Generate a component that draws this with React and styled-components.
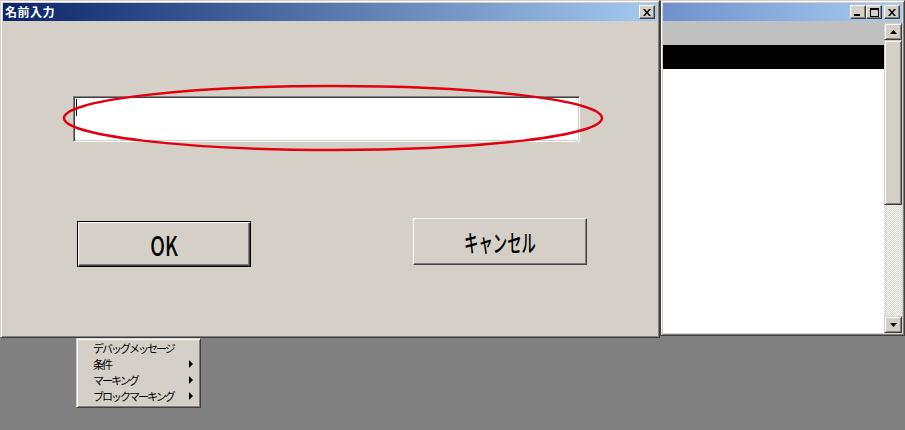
import React from "react";
import styled, { createGlobalStyle } from "styled-components";

const Global = createGlobalStyle`
  html, body { margin: 0; padding: 0; }
  body {
    width: 905px; height: 430px; overflow: hidden;
    background: #808080;
    font-family: "Noto Sans CJK JP", "Noto Sans", sans-serif;
  }
  * { box-sizing: border-box; }
`;

const Desktop = styled.div`
  width: 905px; height: 430px;
  display: flex; flex-direction: column;
  overflow: hidden;
`;

const TopRow = styled.div`
  display: flex; align-items: flex-start;
`;

const Frame = styled.div`
  background: #d4d0c8;
  border: 1px solid;
  border-color: #d4d0c8 #404040 #404040 #d4d0c8;
  box-shadow: inset 1px 1px #fff, inset -1px -1px #808080;
  padding: 2px;
  display: flex; flex-direction: column;
`;

const Dialog = styled(Frame)`
  width: 660px; height: 338px; flex: none;
`;

const BgWindow = styled(Frame)`
  flex: 1; height: 336px; border-left-color: #404040;
`;

const TitleBar = styled.div`
  height: 18px; flex: none;
  display: flex; align-items: center;
  padding: 0 2px 0 2px;
  background: ${p => p.$alt
    ? "linear-gradient(to right, #6f90cc, #a9ccf2)"
    : "linear-gradient(to right, #0a246a, #a6caf0)"};
`;

const Title = styled.span`
  flex: 1;
  color: #fff; font-weight: bold; font-size: 12px; letter-spacing: 0.5px;
  line-height: 18px;
`;

const CapBtn = styled.div`
  width: 16px; height: 14px; flex: none;
  margin-left: ${p => p.$gap || 0}px;
  background: #d4d0c8;
  border: 1px solid; border-color: #fff #404040 #404040 #fff;
  box-shadow: inset -1px -1px #808080;
  display: flex; align-items: center; justify-content: center;
`;

const DialogBody = styled.div`
  flex: 1; display: flex; flex-direction: column;
  padding: 75px 0 0 70px;
`;

const FieldWrap = styled.div`
  position: relative; width: 507px; height: 46px;
`;

const Field = styled.div`
  width: 100%; height: 100%;
  background: #fff;
  border: 1px solid; border-color: #808080 #fff #fff #808080;
  box-shadow: inset 1px 1px #404040, inset -1px -1px #d4d0c8;
  padding: 2px 0 0 2px;
`;

const Caret = styled.div`
  width: 1px; height: 17px; background: #000;
`;

const Ellipse = styled.svg`
  position: absolute; left: -10px; top: -12px; overflow: visible;
`;

const ButtonRow = styled.div`
  display: flex; align-items: flex-start;
  margin-top: 79px; padding-left: 4px;
`;

const PushButton = styled.div`
  width: 174px; height: ${p => p.$h || 46}px;
  margin-left: ${p => p.$ml || 0}px;
  margin-top: ${p => p.$mt || 0}px;
  background: #d4d0c8;
  border: 1px solid;
  border-color: ${p => p.$default ? "#000" : "#fff #404040 #404040 #fff"};
  box-shadow: ${p => p.$default
    ? "inset 1px 1px #fff, inset -1px -1px #404040, inset -2px -2px #808080"
    : "inset -1px -1px #808080"};
  display: flex; align-items: center; justify-content: center;
`;

const BtnLabel = styled.span`
  display: inline-block;
  font-family: "Noto Sans CJK JP", "Noto Sans", sans-serif;
  font-size: ${p => p.$size || 26}px;
  font-weight: 500;
  color: #000;
  transform: scaleX(${p => p.$sx || 0.7});
  line-height: 1;
`;

const Client = styled.div`
  flex: 1; display: flex; background: #c0c0c0;
`;

const ListArea = styled.div`
  flex: 1; display: flex; flex-direction: column;
`;

const Band = styled.div`
  height: 24px; flex: none; background: ${p => p.$c};
`;

const White = styled.div`
  flex: 1; background: #fff;
`;

const ScrollBar = styled.div`
  width: 18px; flex: none; margin-top: 2px; margin-right: 0;
  display: flex; flex-direction: column;
  background: repeating-conic-gradient(#fff 0 25%, #d4d0c8 0 50%) 0 0 / 2px 2px;
`;

const ScrollBtn = styled.div`
  height: ${p => p.$h || 17}px; flex: none;
  background: #d4d0c8;
  border: 1px solid; border-color: #d4d0c8 #404040 #404040 #d4d0c8;
  box-shadow: inset 1px 1px #fff, inset -1px -1px #808080;
  display: flex; align-items: center; justify-content: center;
`;

const Track = styled.div`
  flex: 1;
`;

const Menu = styled.div`
  margin-left: 76px; width: 125px; height: 70px;
  background: #d4d0c8;
  border: 1px solid; border-color: #d4d0c8 #404040 #404040 #d4d0c8;
  box-shadow: inset 1px 1px #fff, inset -1px -1px #808080;
  padding: 1px 3px 0 3px;
  display: flex; flex-direction: column;
`;

const MenuItem = styled.div`
  height: 16px; display: flex; align-items: center;
  padding-left: 13px; padding-right: 4px;
  font-size: 11px; color: #000; letter-spacing: -2px;
  white-space: nowrap;
`;

const MenuText = styled.span`
  flex: 1;
`;

const Arrow = styled.span`
  width: 0; height: 0;
  border-top: 4px solid transparent; border-bottom: 4px solid transparent;
  border-left: 4px solid #000;
`;

const CloseGlyph = () => (
  <svg width="8" height="7" viewBox="0 0 8 7">
    <path d="M0 0h2l2 2.5 2-2.5h2l-3 3.5 3 3.5h-2l-2-2.5-2 2.5h-2l3-3.5z" fill="#000" />
  </svg>
);

const MinGlyph = () => (
  <svg width="8" height="7" viewBox="0 0 8 7"><rect x="0" y="5" width="6" height="2" fill="#000" /></svg>
);

const MaxGlyph = () => (
  <svg width="9" height="9" viewBox="0 0 9 9">
    <rect x="0.5" y="0.5" width="8" height="8" fill="none" stroke="#000" />
    <rect x="0" y="0" width="9" height="2" fill="#000" />
  </svg>
);

const Tri = ({ down }) => (
  <svg width="7" height="4" viewBox="0 0 7 4">
    <path d={down ? "M0 0h7l-3.5 4z" : "M3.5 0l3.5 4h-7z"} fill="#000" />
  </svg>
);

export default function App() {
  return (
    <>
      <Global />
      <Desktop>
        <TopRow>
          <Dialog>
            <TitleBar>
              <Title>名前入力</Title>
              <CapBtn><CloseGlyph /></CapBtn>
            </TitleBar>
            <DialogBody>
              <FieldWrap>
                <Field><Caret /></Field>
                <Ellipse width="540" height="68">
                  <ellipse cx="270" cy="34" rx="269" ry="32" fill="none" stroke="#e00010" strokeWidth="2.5" />
                </Ellipse>
              </FieldWrap>
              <ButtonRow>
                <PushButton $default>
                  <BtnLabel $size={27} $sx={0.72}>OK</BtnLabel>
                </PushButton>
                <PushButton $ml={162} $mt={-3} $h={47}>
                  <BtnLabel $size={24} $sx={0.6}>キャンセル</BtnLabel>
                </PushButton>
              </ButtonRow>
            </DialogBody>
          </Dialog>
          <BgWindow>
            <TitleBar $alt>
              <Title />
              <CapBtn><MinGlyph /></CapBtn>
              <CapBtn><MaxGlyph /></CapBtn>
              <CapBtn $gap={2}><CloseGlyph /></CapBtn>
            </TitleBar>
            <Client>
              <ListArea>
                <Band $c="#c0c0c0" />
                <Band $c="#000" />
                <White />
              </ListArea>
              <ScrollBar>
                <ScrollBtn><Tri /></ScrollBtn>
                <ScrollBtn $h={165} />
                <Track />
                <ScrollBtn><Tri down /></ScrollBtn>
              </ScrollBar>
            </Client>
          </BgWindow>
        </TopRow>
        <Menu>
          <MenuItem><MenuText>デバッグメッセージ</MenuText></MenuItem>
          <MenuItem><MenuText>条件</MenuText><Arrow /></MenuItem>
          <MenuItem><MenuText>マーキング</MenuText><Arrow /></MenuItem>
          <MenuItem><MenuText>ブロックマーキング</MenuText><Arrow /></MenuItem>
        </Menu>
      </Desktop>
    </>
  );
}
